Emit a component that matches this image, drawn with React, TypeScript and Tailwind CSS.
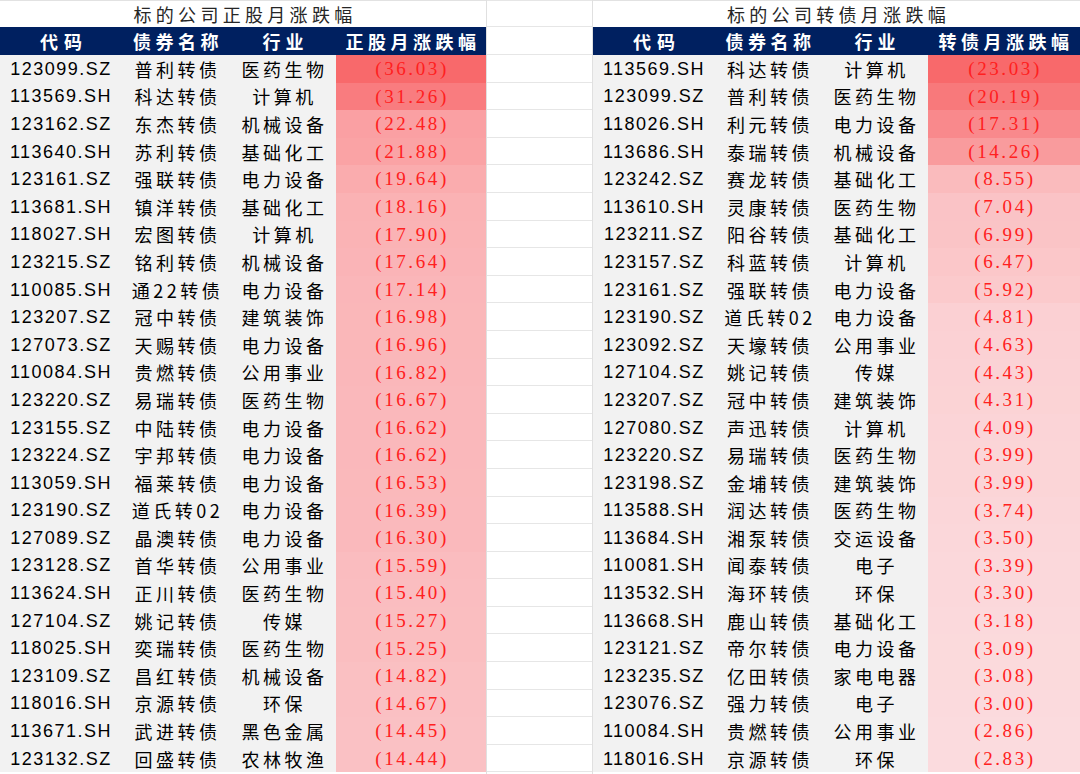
type Row = [string, string, string, number]

const leftRows: Row[] = [
  ["123099.SZ", "普利转债", "医药生物", 36.03],
  ["113569.SH", "科达转债", "计算机", 31.26],
  ["123162.SZ", "东杰转债", "机械设备", 22.48],
  ["113640.SH", "苏利转债", "基础化工", 21.88],
  ["123161.SZ", "强联转债", "电力设备", 19.64],
  ["113681.SH", "镇洋转债", "基础化工", 18.16],
  ["118027.SH", "宏图转债", "计算机", 17.9],
  ["123215.SZ", "铭利转债", "机械设备", 17.64],
  ["110085.SH", "通22转债", "电力设备", 17.14],
  ["123207.SZ", "冠中转债", "建筑装饰", 16.98],
  ["127073.SZ", "天赐转债", "电力设备", 16.96],
  ["110084.SH", "贵燃转债", "公用事业", 16.82],
  ["123220.SZ", "易瑞转债", "医药生物", 16.67],
  ["123155.SZ", "中陆转债", "电力设备", 16.62],
  ["123224.SZ", "宇邦转债", "电力设备", 16.62],
  ["113059.SH", "福莱转债", "电力设备", 16.53],
  ["123190.SZ", "道氏转02", "电力设备", 16.39],
  ["127089.SZ", "晶澳转债", "电力设备", 16.3],
  ["123128.SZ", "首华转债", "公用事业", 15.59],
  ["113624.SH", "正川转债", "医药生物", 15.4],
  ["127104.SZ", "姚记转债", "传媒", 15.27],
  ["118025.SH", "奕瑞转债", "医药生物", 15.25],
  ["123109.SZ", "昌红转债", "机械设备", 14.82],
  ["118016.SH", "京源转债", "环保", 14.67],
  ["113671.SH", "武进转债", "黑色金属", 14.45],
  ["123132.SZ", "回盛转债", "农林牧渔", 14.44],
]

const rightRows: Row[] = [
  ["113569.SH", "科达转债", "计算机", 23.03],
  ["123099.SZ", "普利转债", "医药生物", 20.19],
  ["118026.SH", "利元转债", "电力设备", 17.31],
  ["113686.SH", "泰瑞转债", "机械设备", 14.26],
  ["123242.SZ", "赛龙转债", "基础化工", 8.55],
  ["113610.SH", "灵康转债", "医药生物", 7.04],
  ["123211.SZ", "阳谷转债", "基础化工", 6.99],
  ["123157.SZ", "科蓝转债", "计算机", 6.47],
  ["123161.SZ", "强联转债", "电力设备", 5.92],
  ["123190.SZ", "道氏转02", "电力设备", 4.81],
  ["123092.SZ", "天壕转债", "公用事业", 4.63],
  ["127104.SZ", "姚记转债", "传媒", 4.43],
  ["123207.SZ", "冠中转债", "建筑装饰", 4.31],
  ["127080.SZ", "声迅转债", "计算机", 4.09],
  ["123220.SZ", "易瑞转债", "医药生物", 3.99],
  ["123198.SZ", "金埔转债", "建筑装饰", 3.99],
  ["113588.SH", "润达转债", "医药生物", 3.74],
  ["113684.SH", "湘泵转债", "交运设备", 3.5],
  ["110081.SH", "闻泰转债", "电子", 3.39],
  ["113532.SH", "海环转债", "环保", 3.3],
  ["113668.SH", "鹿山转债", "基础化工", 3.18],
  ["123121.SZ", "帝尔转债", "电力设备", 3.09],
  ["123235.SZ", "亿田转债", "家电电器", 3.08],
  ["123076.SZ", "强力转债", "电子", 3.0],
  ["110084.SH", "贵燃转债", "公用事业", 2.86],
  ["118016.SH", "京源转债", "环保", 2.83],
]

// excel-style 2 colour scale: #FCFCFF (low) -> #F8696B (high)
function heat(v: number, lo: number, hi: number) {
  const t = Math.max(0, Math.min(1, (v - lo) / (hi - lo)))
  const r = Math.round(252 + (248 - 252) * t)
  const g = Math.round(252 + (105 - 252) * t)
  const b = Math.round(255 + (107 - 255) * t)
  return `rgb(${r},${g},${b})`
}

const cjk = "font-['Noto_Sans_CJK_SC',sans-serif]"

function Table({
  title,
  valueHead,
  rows,
  lo,
  widths,
}: {
  title: string
  valueHead: string
  rows: Row[]
  lo: number
  widths: string[]
}) {
  const hi = rows[0][3]
  return (
    <div className="flex flex-col">
      <div
        className={`h-[27px] flex items-center justify-center text-[18px] tracking-[4.3px] pl-[4px] text-[#262626] bg-white border-t border-[#e2e2e2] ${cjk}`}
      >
        {title}
      </div>
      <div className={`h-[28px] flex bg-[#002060] text-white font-bold text-[18px] ${cjk}`}>
        <div className={`${widths[0]} flex items-center justify-center tracking-[6px] pl-[6px]`}>代码</div>
        <div className={`${widths[1]} flex items-center justify-center tracking-[4.5px] pl-[4px]`}>债券名称</div>
        <div className={`${widths[2]} flex items-center justify-center tracking-[5px] pl-[5px]`}>行业</div>
        <div className={`${widths[3]} flex items-center justify-center tracking-[4.5px] pl-[4px]`}>{valueHead}</div>
      </div>
      {rows.map((r, i) => (
        <div key={i} className="h-[27.6px] flex bg-[#f2f2f2] text-black">
          <div
            className={`${widths[0]} flex items-center justify-center pt-[1px] font-['Liberation_Sans',sans-serif] text-[18px] tracking-[1.5px]`}
          >
            {r[0]}
          </div>
          <div className={`${widths[1]} flex items-center justify-center pt-[1px] text-[18px] tracking-[3.5px] pl-[3px] ${cjk}`}>
            {r[1]}
          </div>
          <div className={`${widths[2]} flex items-center justify-center pt-[1px] text-[18px] tracking-[3.5px] pl-[3px] ${cjk}`}>
            {r[2]}
          </div>
          <div
            className={`${widths[3]} flex items-center justify-center pt-[1px] text-[#ff2020] font-['Liberation_Serif',serif] text-[19px] tracking-[2.6px] pl-[2px]`}
            style={{ backgroundColor: heat(r[3], lo, hi) }}
          >
            ({r[3].toFixed(2)})
          </div>
        </div>
      ))}
    </div>
  )
}

export default function App() {
  return (
    <div className="w-[1080px] h-[774px] overflow-hidden bg-white flex">
      <div className="w-[486px] shrink-0">
        <Table
          title="标的公司正股月涨跌幅"
          valueHead="正股月涨跌幅"
          rows={leftRows}
          lo={0}
          widths={["w-[122px]", "w-[108px]", "w-[106px]", "w-[150px]"]}
        />
      </div>
      <div className="w-[107px] shrink-0 flex flex-col border-x border-[#e0e0e0]">
        <div className="h-[27px] border-t border-b border-[#e6e6e6]" />
        <div className="h-[28px] border-b border-[#e6e6e6]" />
        {leftRows.map((_, i) => (
          <div key={i} className="h-[27.6px] shrink-0 border-b border-[#e6e6e6]" />
        ))}
      </div>
      <div className="flex-1">
        <Table
          title="标的公司转债月涨跌幅"
          valueHead="转债月涨跌幅"
          rows={rightRows}
          lo={-3}
          widths={["w-[122px]", "w-[107px]", "w-[106px]", "w-[152px]"]}
        />
      </div>
    </div>
  )
}
